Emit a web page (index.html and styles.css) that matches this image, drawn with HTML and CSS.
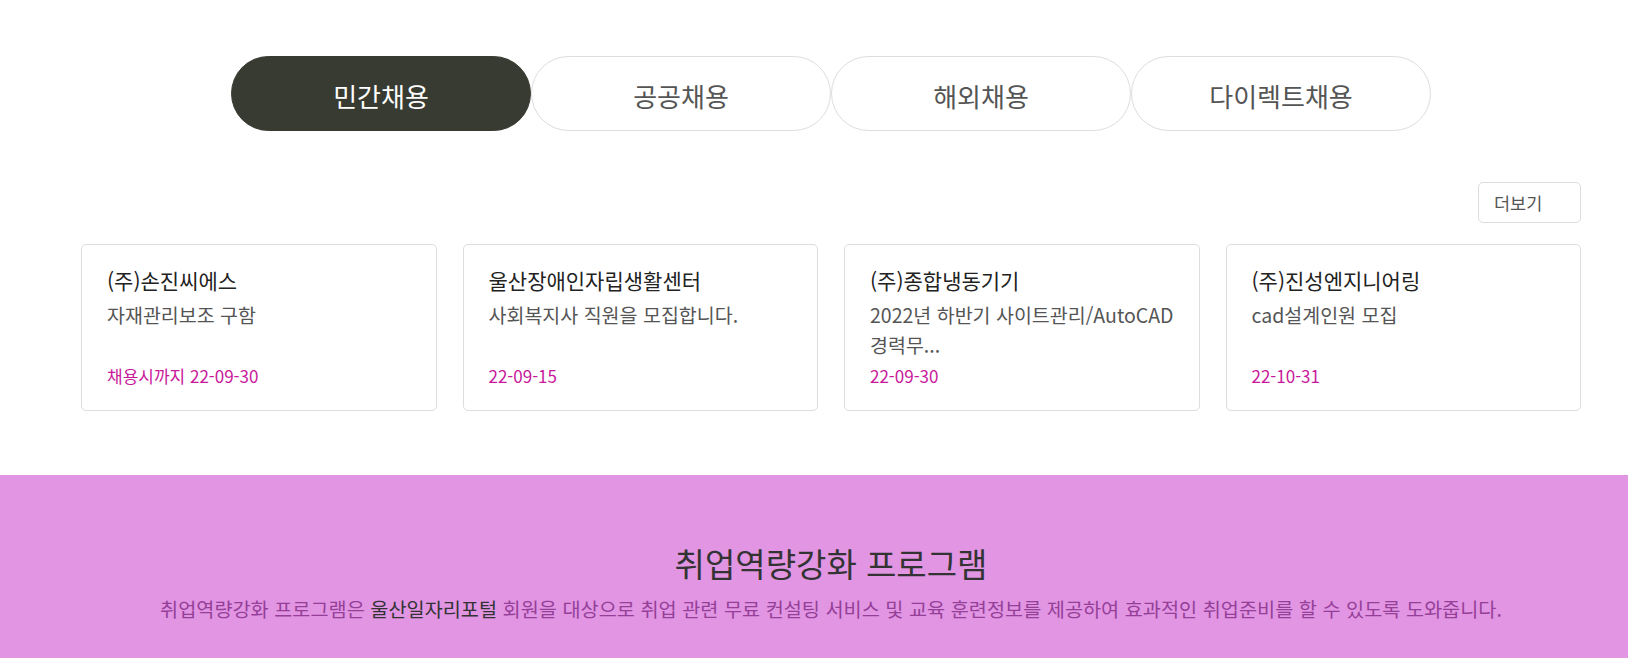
FILE: index.html
```html
<!DOCTYPE html>
<html lang="ko">
<head>
<meta charset="utf-8">
<title>채용정보</title>
<link rel="stylesheet" href="styles.css">
</head>
<body>
<section class="jobs">
  <div class="wrap">
    <nav class="tabs">
      <a class="tab active">민간채용</a>
      <a class="tab">공공채용</a>
      <a class="tab">해외채용</a>
      <a class="tab">다이렉트채용</a>
    </nav>
    <div class="more-row">
      <a class="more">더보기</a>
    </div>
    <ul class="cards">
      <li class="card">
        <p class="company">(주)손진씨에스</p>
        <p class="subject">자재관리보조 구함</p>
        <p class="date">채용시까지 22-09-30</p>
      </li>
      <li class="card">
        <p class="company">울산장애인자립생활센터</p>
        <p class="subject">사회복지사 직원을 모집합니다.</p>
        <p class="date">22-09-15</p>
      </li>
      <li class="card">
        <p class="company">(주)종합냉동기기</p>
        <p class="subject">2022년 하반기 사이트관리/AutoCAD 경력무...</p>
        <p class="date">22-09-30</p>
      </li>
      <li class="card">
        <p class="company">(주)진성엔지니어링</p>
        <p class="subject">cad설계인원 모집</p>
        <p class="date">22-10-31</p>
      </li>
    </ul>
  </div>
</section>
<section class="program">
  <div class="wrap">
    <h2 class="program-title">취업역량강화 프로그램</h2>
    <p class="program-desc">취업역량강화 프로그램은 <strong>울산일자리포털</strong> 회원을 대상으로 취업 관련 무료 컨설팅 서비스 및 교육 훈련정보를 제공하여 효과적인 취업준비를 할 수 있도록 도와줍니다.</p>
  </div>
</section>
</body>
</html>
```
FILE: styles.css
```css
* { box-sizing: border-box; }
html, body { margin: 0; padding: 0; background: #fff; }
body {
  font-family: "Noto Sans CJK KR", "Noto Sans", sans-serif;
  color: #333;
  overflow: hidden;
}
.wrap {
  width: 1500px;
  margin-left: 81px;
}
.jobs { padding: 56px 0 64px; }
.tabs {
  display: flex;
  justify-content: center;
}
.tab {
  width: 300px;
  height: 75px;
  display: flex;
  align-items: center;
  justify-content: center;
  padding-top: 3px;
  border: 1px solid #dddddd;
  border-radius: 38px;
  font-size: 26px;
  color: #555;
  background: #fff;
  cursor: pointer;
}
.tab.active {
  background: #383b31;
  border-color: #383b31;
  color: #fff;
}
.more-row {
  display: flex;
  justify-content: flex-end;
  margin-top: 51px;
}
.more {
  width: 103px;
  height: 41px;
  border: 1px solid #dddddd;
  border-radius: 5px;
  font-size: 17.5px;
  color: #555;
  padding-left: 15px;
  line-height: 39px;
}
.cards {
  list-style: none;
  margin: 21px 0 0;
  padding: 0;
  display: grid;
  grid-template-columns: repeat(4, 1fr);
  gap: 26px;
}
.card {
  border: 1px solid #dddddd;
  border-radius: 5px;
  padding: 21px 12px 21px 25px;
  height: 167px;
}
.card p { margin: 0; }
.company {
  font-size: 21px;
  line-height: 28px;
  color: #222;
}
.subject {
  margin-top: 6px !important;
  font-size: 19.5px;
  line-height: 30px;
  height: 60px;
  color: #555;
  overflow: hidden;
}
.date {
  margin-top: 4px !important;
  font-size: 17px;
  line-height: 24px;
  color: #c8189b;
}
.program {
  background: #e195e3;
  padding: 68px 0 40px;
}
.program-title {
  margin: 0;
  text-align: center;
  font-size: 33px;
  line-height: 40px;
  font-weight: 400;
  color: #333;
}
.program-desc {
  margin: 12px 0 0;
  text-align: center;
  font-size: 19.7px;
  line-height: 28px;
  color: #953f98;
}
.program-desc strong {
  font-weight: 400;
  color: #333;
}
```
